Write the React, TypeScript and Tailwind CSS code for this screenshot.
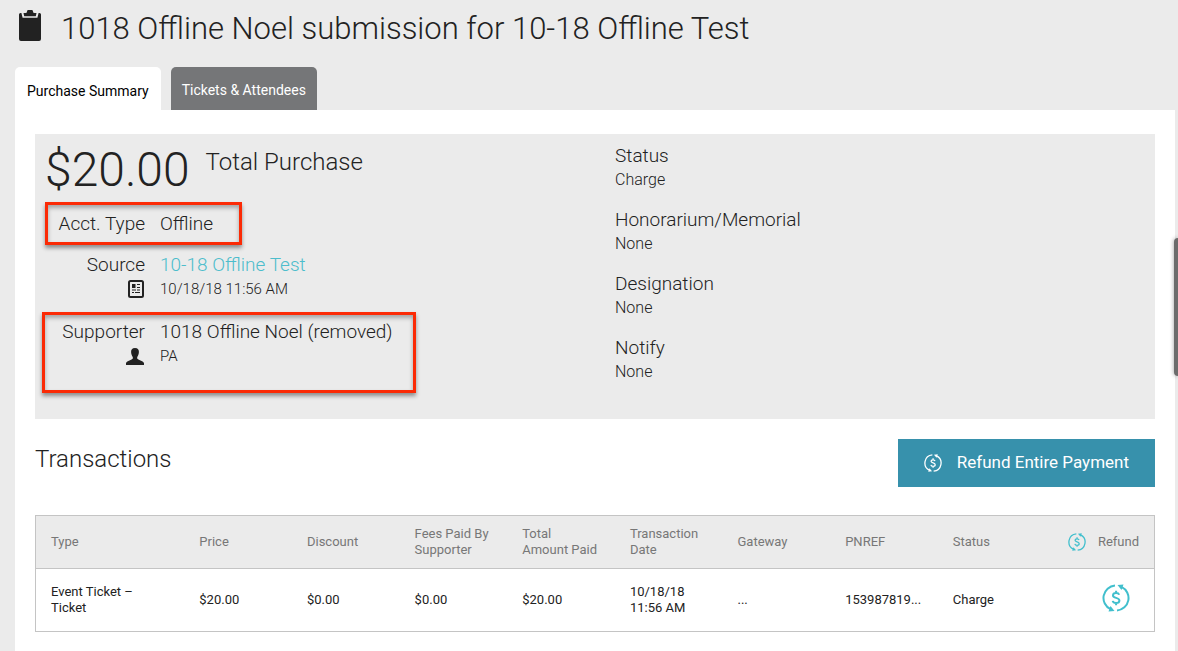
import type { ReactNode } from "react";

// ─── Data ─────────────────────────────────────────────────────────────────────

const details = [
  { label: "Status", value: "Charge" },
  { label: "Honorarium/Memorial", value: "None" },
  { label: "Designation", value: "None" },
  { label: "Notify", value: "None" },
];

const columns = [
  "Type",
  "Price",
  "Discount",
  "Fees Paid By Supporter",
  "Total Amount Paid",
  "Transaction Date",
  "Gateway",
  "PNREF",
  "Status",
];

const transactions = [
  [
    "Event Ticket – Ticket",
    "$20.00",
    "$0.00",
    "$0.00",
    "$20.00",
    "10/18/18 11:56 AM",
    "...",
    "153987819...",
    "Charge",
  ],
];

// ─── Icons ────────────────────────────────────────────────────────────────────

function ClipboardIcon() {
  return (
    <svg viewBox="0 0 22 31" className="h-[31px] w-[22px]" fill="#222" aria-hidden="true">
      <path d="M1.5 3H2.4L3.6 7.8H18.4L19.6 3H20.5Q22 3 22 4.5V29Q22 31 20 31H2Q0 31 0 29V4.5Q0 3 1.5 3Z" />
      <path d="M4.5 3H6.5Q8 3 8 1.5Q8 0 9 0H13Q14 0 14 1.5Q14 3 15.5 3H17.5L16.8 6.2H5.2Z" />
    </svg>
  );
}

function FormIcon() {
  return (
    <svg viewBox="0 0 16 18" className="h-[18px] w-4" fill="none" stroke="#222" aria-hidden="true">
      <rect x="1" y="1" width="14" height="16" rx="1.5" strokeWidth="2" />
      <path d="M4 5H7.5M4 7H7.5" strokeWidth="2" />
      <path d="M9 4.5H12M9 7.5H12M4 10H8M9 10H12M4 12.5H6M7 12.5H12" strokeWidth="1.2" />
    </svg>
  );
}

function PersonIcon() {
  return (
    <svg viewBox="0 0 18 17" className="h-[17px] w-[18px]" fill="#222" aria-hidden="true">
      <path d="M9 0C12 0 13 1.8 12.9 4C12.8 6.5 11.9 8 11.2 9V10.5C12 12.3 17 12.6 18 15V17H0V15C1 12.6 6 12.3 6.8 10.5V9C6.1 8 5.2 6.5 5.1 4C5 1.8 6 0 9 0Z" />
    </svg>
  );
}

function RefundIcon({ className }: { className: string }) {
  return (
    <svg viewBox="0 0 28 28" className={className} fill="none" stroke="currentColor" strokeWidth="2" aria-hidden="true">
      <path d="M13 1.5A12.5 12.5 0 0 0 8.5 25.2" />
      <path d="M15 26.5A12.5 12.5 0 0 0 19.5 2.8" />
      <path d="M8.5 22L12.5 27L6.5 27.5Z" fill="currentColor" stroke="none" />
      <path d="M19.5 6L15.5 1L21.5 .5Z" fill="currentColor" stroke="none" />
      <path d="M17.2 10.8C16.8 9.6 15.6 9 14.1 9C12.3 9 11 9.9 11 11.4C11 14.8 17.4 13 17.4 16.6C17.4 18.2 16 19.1 14.1 19.1C12.3 19.1 11 18.3 10.7 16.9M14.1 6.8V9M14.1 19.1V21.3" />
    </svg>
  );
}

// ─── Summary row ──────────────────────────────────────────────────────────────

function SummaryRow({ label, icon, children }: { label: string; icon?: ReactNode; children: ReactNode }) {
  return (
    <div className="flex gap-[15px]">
      <div className="flex w-[110px] shrink-0 flex-col items-end">
        <span className="text-[19px] leading-7">{label}</span>
        {icon && <span className="flex h-5 items-center pr-px">{icon}</span>}
      </div>
      <div className="text-[15px] leading-5">{children}</div>
    </div>
  );
}

// ─── Page ─────────────────────────────────────────────────────────────────────

export default function App() {
  return (
    <div className="relative flex min-h-screen flex-col overflow-hidden bg-[#ebebeb] pr-[3px] pl-[15px] font-[Roboto,sans-serif] font-light text-[#222]">
      <header className="flex h-[67px] items-start gap-5 pt-2 pl-1">
        <div className="pt-0.5">
          <ClipboardIcon />
        </div>
        <h1 className="text-[31px] leading-[42px]">
          1018 Offline Noel submission for 10-18 Offline Test
        </h1>
      </header>

      <nav className="flex gap-2.5 text-sm font-normal">
        <button type="button" className="h-[43px] rounded-t-[5px] bg-white px-3 pt-1 text-black">
          Purchase Summary
        </button>
        <button type="button" className="h-[43px] rounded-t-[5px] bg-[#757678] px-[11px] pt-0.5 text-white">
          Tickets &amp; Attendees
        </button>
      </nav>

      <main className="flex-1 bg-white px-5 pt-6 pb-5">
        <section className="grid grid-cols-2 bg-[#ebebeb] pb-[37px]">
          <div>
            <div className="flex gap-4 pt-2 pl-2.5">
              <span className="pt-1 text-5xl leading-[48px]">$20.00</span>
              <span className="pt-1 text-2xl leading-8">Total Purchase</span>
            </div>
            <div className="relative mt-4">
              <SummaryRow label="Acct. Type">
                <span className="text-[19px] leading-7">Offline</span>
              </SummaryRow>
              <div className="pointer-events-none absolute -top-2 left-2.5 h-[43px] w-[197px] border-[3px] border-[#fb2a05] shadow-[0_3px_4px_rgba(0,0,0,0.4),inset_0_3px_4px_rgba(0,0,0,0.3)]" />
            </div>
            <div className="mt-[13px]">
              <SummaryRow label="Source" icon={<FormIcon />}>
                <a href="#source" className="block text-[19px] leading-7 text-[#4dbdcc]">
                  10-18 Offline Test
                </a>
                10/18/18 11:56 AM
              </SummaryRow>
            </div>
            <div className="relative mt-[19px]">
              <SummaryRow label="Supporter" icon={<PersonIcon />}>
                <span className="block text-[19px] leading-7">1018 Offline Noel (removed)</span>
                PA
              </SummaryRow>
              <div className="pointer-events-none absolute -top-1.5 left-[7px] h-[81px] w-[374px] border-[3px] border-[#fb2a05] shadow-[0_3px_4px_rgba(0,0,0,0.4),inset_0_3px_4px_rgba(0,0,0,0.3)]" />
            </div>
          </div>

          <dl className="flex flex-col gap-4 pt-2 pl-5">
            {details.map((item) => (
              <div key={item.label}>
                <dt className="text-[19px] leading-7">{item.label}</dt>
                <dd className="text-base leading-5">{item.value}</dd>
              </div>
            ))}
          </dl>
        </section>

        <div className="flex justify-between pt-5 pb-7">
          <h2 className="pt-1 text-2xl leading-8">Transactions</h2>
          <button
            type="button"
            className="flex h-12 items-center gap-[15px] bg-[#3791ac] px-[26px] text-[17px] font-normal text-white"
          >
            <RefundIcon className="size-[18px]" />
            Refund Entire Payment
          </button>
        </div>

        <table className="w-full table-fixed border border-[#c4c4c4] text-left text-[13px] leading-4">
          <colgroup>
            <col className="w-[13.3%]" />
            <col span={8} className="w-[9.62%]" />
            <col />
          </colgroup>
          <thead className="border-b border-[#c4c4c4] bg-[#ebebeb] text-[#777]">
            <tr className="h-[53px]">
              {columns.map((name) => (
                <th key={name} className="pr-4 pl-[15px] font-normal">
                  {name}
                </th>
              ))}
              <th className="pr-[15px] font-normal">
                <span className="flex items-center justify-end gap-3">
                  <RefundIcon className="size-[18px] text-[#41bfcd]" />
                  Refund
                </span>
              </th>
            </tr>
          </thead>
          <tbody>
            {transactions.map((cells) => (
              <tr key={cells[7]} className="h-[63px]">
                {cells.map((cell, i) => (
                  <td key={columns[i]} className="pr-4 pl-[15px] font-normal text-[#222]">
                    {cell}
                  </td>
                ))}
                <td className="pr-6 pb-1">
                  <button type="button" aria-label="Refund ticket" className="ml-auto block text-[#41bfcd]">
                    <RefundIcon className="size-7" />
                  </button>
                </td>
              </tr>
            ))}
          </tbody>
        </table>
      </main>

      {/* Side drawer handle */}
      <div className="absolute top-[238px] right-0 h-[138px] w-1 rounded-l-sm bg-[#6c6c6c] shadow-[0_0_4px_rgba(0,0,0,0.4)]" />
    </div>
  );
}
